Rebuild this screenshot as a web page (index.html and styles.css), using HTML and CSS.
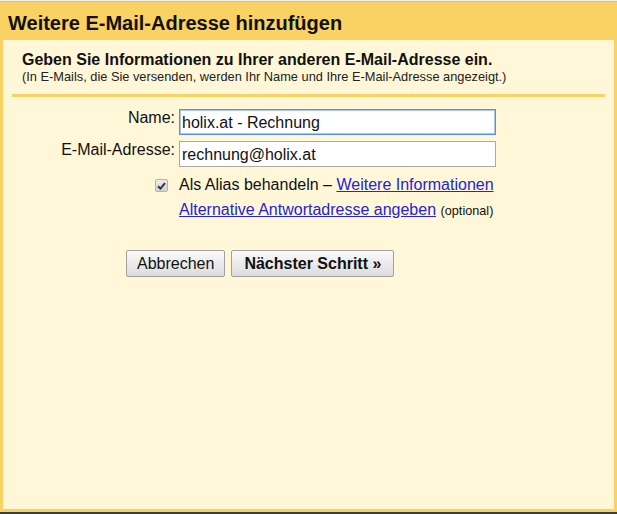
FILE: index.html
```html
<!DOCTYPE html>
<html lang="de">

<head>
    <meta charset="UTF-8">
    <meta name="viewport" content="width=device-width, initial-scale=1.0">
    <title>Weitere E-Mail-Adresse hinzufügen</title>
    <link rel="stylesheet" href="styles.css">
</head>

<body>
    <div class="dialog">
        <div class="title">Weitere E-Mail-Adresse hinzufügen</div>
        <div class="panel">
            <div class="intro">
                <div class="intro-head">Geben Sie Informationen zu Ihrer anderen E-Mail-Adresse ein.</div>
                <div class="intro-sub">(In E-Mails, die Sie versenden, werden Ihr Name und Ihre E-Mail-Adresse angezeigt.)</div>
            </div>
            <div class="sep"></div>
            <div class="form">
                <label class="label" for="name">Name:</label>
                <input class="field focus" type="text" id="name" value="holix.at - Rechnung">
                <label class="label" for="mail">E-Mail-Adresse:</label>
                <input class="field" type="text" id="mail" value="rechnung@holix.at">
                <div class="check-cell">
                    <span class="check">
                        <svg width="9" height="8" viewBox="0 0 9 8"><path d="M1 4.2 L3.4 6.6 L8 1.2" fill="none" stroke="#333" stroke-width="2"/></svg>
                    </span>
                </div>
                <div class="line">Als Alias behandeln – <a href="javascript:;">Weitere Informationen</a></div>
                <div></div>
                <div class="line second"><a href="javascript:;">Alternative Antwortadresse angeben</a> <span class="small">(optional)</span></div>
            </div>
            <div class="buttons">
                <button class="btn">Abbrechen</button>
                <button class="btn primary">Nächster Schritt »</button>
            </div>
        </div>
    </div>
    <div class="taskbar"></div>
</body>

</html>
```

FILE: styles.css
```css
html,
body {
    margin: 0;
    padding: 0;
    height: 100%;
}

body {
    display: flex;
    flex-direction: column;
    padding-top: 1px;
    box-sizing: border-box;
    background: #f2f2f2;
    font-family: "Liberation Sans", Arial, sans-serif;
    color: #222;
}

.dialog {
    flex: 1;
    display: flex;
    flex-direction: column;
    border-top: 1px solid #c2c2c6;
    background: #fad163;
    padding: 0 3px 3px 3px;
}

.title {
    height: 38px;
    box-sizing: border-box;
    padding: 10px 0 0 5px;
    font-size: 20px;
    font-weight: bold;
    line-height: 23px;
    color: #111;
}

.panel {
    flex: 1;
    background: #fff7d7;
    padding: 0 9px;
}

.intro {
    padding: 11px 0 0 10px;
}

.intro-head {
    font-size: 16px;
    font-weight: bold;
    line-height: 18px;
    color: #111;
}

.intro-sub {
    font-size: 12.8px;
    line-height: 15px;
}

.sep {
    height: 3px;
    background: #fad163;
    margin-top: 10px;
}

.form {
    display: grid;
    grid-template-columns: 163px 317px;
    column-gap: 4px;
    row-gap: 6px;
    margin-top: 12px;
    font-size: 16px;
}

.label {
    text-align: right;
    line-height: 18px;
    color: #111;
}

.field {
    height: 26px;
    box-sizing: border-box;
    border: 1px solid #a9a9a9;
    background: #fff;
    font-family: "Liberation Sans", Arial, sans-serif;
    font-size: 16px;
    color: #111;
    padding: 1px 3px 0 2px;
    margin: 0;
    outline: none;
}

.field.focus {
    border: 1px solid #4d90fe;
    box-shadow: inset 0 0 0 1px #a9c5f0;
}

.check-cell {
    display: flex;
    justify-content: flex-end;
    padding: 6px 7px 0 0;
}

.check {
    width: 13px;
    height: 13px;
    box-sizing: border-box;
    border: 1px solid #b4b4b4;
    border-radius: 2px;
    background: linear-gradient(#ececec, #d2d2d2);
    display: flex;
    align-items: center;
    justify-content: center;
}

.line {
    line-height: 24px;
    color: #111;
}

.line.second {
    margin-top: -5px;
}

.line a {
    color: #2424d8;
    text-decoration: underline;
}

.small {
    font-size: 12.7px;
}

.buttons {
    display: flex;
    gap: 6px;
    margin: 27px 0 0 114px;
}

.btn {
    height: 27px;
    box-sizing: border-box;
    border: 1px solid #a0a0a0;
    border-radius: 2px;
    background: linear-gradient(#fafafa, #dcdcdc);
    font-family: "Liberation Sans", Arial, sans-serif;
    font-size: 16px;
    color: #111;
    padding: 0 10px;
    margin: 0;
}

.btn.primary {
    font-weight: bold;
    padding: 0 12px;
}

.taskbar {
    height: 2px;
    background: #3d3d3d;
}
```
